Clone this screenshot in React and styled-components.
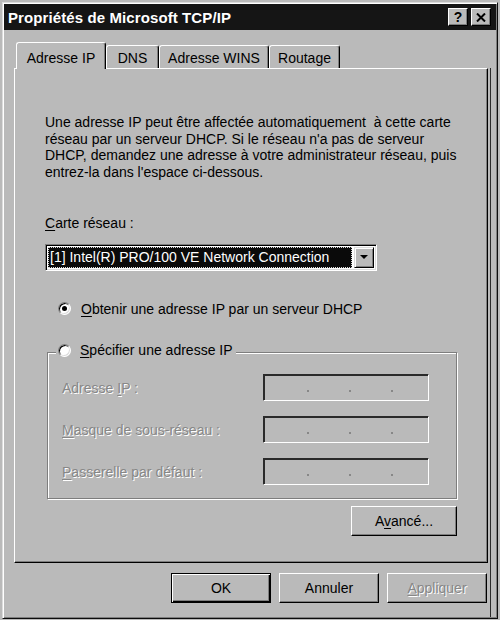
import React from 'react'
import styled, { createGlobalStyle, css } from 'styled-components'

const FACE = '#bababa'
const SHADOW = '#7e7e7e'

const GlobalStyle = createGlobalStyle`
  html, body {
    margin: 0;
    padding: 0;
    background: ${FACE};
  }
  body {
    font-family: "Liberation Sans", Arial, sans-serif;
    font-size: 14px;
    color: #000;
  }
`;

const Screen = styled.div`
  width: 500px;
  height: 620px;
  overflow: hidden;
  background: ${FACE};
  padding: 2px 0 0 2px;
  box-sizing: border-box;
`;

const Dialog = styled.div`
  box-sizing: border-box;
  width: 496px;
  height: 617px;
  padding: 1px;
  background: ${FACE};
  border: 1px solid;
  border-color: #dcdcdc #0c0c0c #0c0c0c #dcdcdc;
  box-shadow: inset 1px 1px #fff, inset -1px -1px ${SHADOW};
  display: flex;
  flex-direction: column;
`;

const TitleBar = styled.div`
  height: 26px;
  background: #151515;
  display: flex;
  align-items: center;
  justify-content: space-between;
  padding: 0 5px 0 4px;
`;

const Title = styled.span`
  color: #fff;
  font-weight: bold;
  font-size: 15px;
  letter-spacing: 0.1px;
`;

const TitleButtons = styled.div`
  display: flex;
  gap: 3px;
`;

const TitleButton = styled.span`
  box-sizing: border-box;
  width: 20px;
  height: 18px;
  background: ${FACE};
  border: 1px solid;
  border-color: #fff #000 #000 #fff;
  box-shadow: inset -1px -1px ${SHADOW};
  display: flex;
  align-items: center;
  justify-content: center;
  font-weight: bold;
  font-size: 14px;
  line-height: 1;
`;

const Body = styled.div`
  flex: 1;
  display: flex;
  padding: 12px 0 0 10px;
`;

const Main = styled.div`
  width: 474px;
  display: flex;
  flex-direction: column;
`;

const Gutter = styled.div`
  flex: 1;
  margin: 26px 0 0 2px;
  border-left: 1px solid #2a2a2a;
`;

const TabStrip = styled.div`
  height: 26px;
  display: flex;
  align-items: flex-end;
  padding-left: 2px;
`;

const Tab = styled.div`
  box-sizing: border-box;
  width: ${p => p.$w}px;
  height: 23px;
  padding-top: 4px;
  line-height: 16px;
  text-align: center;
  background: ${FACE};
  border-top: 1px solid #fff;
  border-left: 1px solid #fff;
  border-right: 1px solid #000;
  border-radius: 3px 3px 0 0;
  box-shadow: inset -1px 0 ${SHADOW};
  white-space: nowrap;
  ${p => p.$active && css`
    height: 27px;
    padding-top: 7px;
    margin-bottom: -1px;
    position: relative;
    z-index: 1;
  `}
`;

const Panel = styled.div`
  box-sizing: border-box;
  height: 495px;
  border: 1px solid;
  border-color: #fff #000 #000 #fff;
  box-shadow: inset -1px -1px ${SHADOW};
  padding: 45px 0 0 30px;
  display: flex;
  flex-direction: column;
`;

const Intro = styled.p`
  margin: 0;
  line-height: 16.5px;
  white-space: nowrap;
`;

const Key = styled.span`
  text-decoration: underline;
  text-underline-offset: 2px;
`;

const FieldLabel = styled.div`
  margin-top: 35px;
  line-height: 16.5px;
`;

const Combo = styled.div`
  box-sizing: border-box;
  width: 332px;
  height: 27px;
  margin-top: 12px;
  display: flex;
  align-items: stretch;
  gap: 2px;
  padding: 1px;
  background: #fff;
  border: 1px solid;
  border-color: ${SHADOW} #fff #fff ${SHADOW};
  box-shadow: inset 1px 1px #000, inset -1px -1px #dcdcdc;
`;

const ComboValue = styled.div`
  flex: 1;
  padding: 1px 0 1px 1px;
  display: flex;
`;

const Selected = styled.span`
  flex: 1;
  background: #0a0a0a;
  color: #fff;
  border: 1px dotted #d8d8d8;
  line-height: 18px;
  padding-left: 1px;
  white-space: nowrap;
`;

const ComboArrow = styled.span`
  box-sizing: border-box;
  width: 20px;
  margin: 1px 1px 1px 0;
  background: ${FACE};
  border: 1px solid;
  border-color: #dcdcdc #000 #000 #dcdcdc;
  box-shadow: inset 1px 1px #fff, inset -1px -1px ${SHADOW};
  display: flex;
  align-items: center;
  justify-content: center;
`;

const RadioRow = styled.label`
  display: flex;
  align-items: center;
  gap: 10px;
  line-height: 16.5px;
  margin: 30px 0 0 13px;
`;

const Radio = styled.span`
  box-sizing: border-box;
  width: 13px;
  height: 13px;
  border-radius: 50%;
  background: #fff;
  border: 1px solid;
  border-color: ${SHADOW} #fff #fff ${SHADOW};
  box-shadow: inset 1px 1px #000, inset -1px -1px #dcdcdc;
  display: flex;
  align-items: center;
  justify-content: center;
  &::after {
    content: '';
    width: 5px;
    height: 5px;
    border-radius: 50%;
    background: ${p => (p.$checked ? '#000' : 'transparent')};
  }
`;

const GroupBox = styled.div`
  box-sizing: border-box;
  position: relative;
  width: 410px;
  height: 147px;
  margin: 35px 0 0 2px;
  padding: 21px 0 0 14px;
  border: 1px solid ${SHADOW};
  box-shadow: 1px 1px 0 #fff, inset 1px 1px 0 #fff;
`;

const Legend = styled.label`
  position: absolute;
  top: -11px;
  left: 8px;
  padding: 0 3px 0 2px;
  background: ${FACE};
  display: flex;
  align-items: center;
  gap: 9px;
  line-height: 16.5px;
`;

const FieldGrid = styled.div`
  display: grid;
  grid-template-columns: 201px 166px;
  grid-auto-rows: 27px;
  row-gap: 15px;
  align-items: center;
`;

const Disabled = styled.span`
  color: #878787;
  text-shadow: 1px 1px #fff;
  white-space: nowrap;
`;

const IpField = styled.div`
  box-sizing: border-box;
  height: 27px;
  background: ${FACE};
  border: 1px solid;
  border-color: #2a2a2a #fff #fff #2a2a2a;
  box-shadow: inset 1px 1px #2a2a2a;
  display: flex;
  align-items: flex-end;
  gap: 40px;
  padding: 0 0 8px 43px;
`;

const Dot = styled.span`
  width: 2px;
  height: 2px;
  background: #878787;
`;

const ActionRow = styled.div`
  width: 412px;
  display: flex;
  justify-content: flex-end;
  margin-top: 7px;
`;

const Button = styled.button`
  box-sizing: border-box;
  width: ${p => p.$w || 100}px;
  height: 30px;
  padding: 0;
  font-family: inherit;
  font-size: 14px;
  color: #000;
  background: ${FACE};
  border: 1px solid;
  border-color: #fff #000 #000 #fff;
  box-shadow: inset -1px -1px ${SHADOW};
  ${p => p.$default && css`
    border-color: #000;
    box-shadow: inset 1px 1px #fff, inset -1px -1px #000, inset -2px -2px ${SHADOW};
  `}
  &:disabled {
    color: #878787;
    text-shadow: 1px 1px #fff;
  }
`;

const DialogButtons = styled.div`
  display: flex;
  justify-content: flex-end;
  gap: 8px;
  margin: 10px 1px 0 0;
`;

const tabs = [
  { label: 'Adresse IP', w: 90, active: true },
  { label: 'DNS', w: 53 },
  { label: 'Adresse WINS', w: 110 },
  { label: 'Routage', w: 71 }
]

const fields = [
  { key: 'I', before: 'Adresse ', after: 'P :' },
  { key: 'M', before: '', after: 'asque de sous-réseau :' },
  { key: 'P', before: '', after: 'asserelle par défaut :' }
]

const App = () => (
  <>
    <GlobalStyle />
    <Screen>
      <Dialog>
        <TitleBar>
          <Title>Propriétés de Microsoft TCP/IP</Title>
          <TitleButtons>
            <TitleButton>?</TitleButton>
            <TitleButton>
              <svg width="10" height="9" viewBox="0 0 10 9">
                <path d="M1 0.5 L9 8.5 M9 0.5 L1 8.5" stroke="#000" strokeWidth="2" />
              </svg>
            </TitleButton>
          </TitleButtons>
        </TitleBar>
        <Body>
          <Main>
            <TabStrip>
              {tabs.map(t => (
                <Tab key={t.label} $w={t.w} $active={t.active}>{t.label}</Tab>
              ))}
            </TabStrip>
            <Panel>
              <Intro>
                Une adresse IP peut être affectée automatiquement&nbsp; à cette carte<br />
                réseau par un serveur DHCP. Si le réseau n'a pas de serveur<br />
                DHCP, demandez une adresse à votre administrateur réseau, puis<br />
                entrez-la dans l'espace ci-dessous.
              </Intro>
              <FieldLabel><Key>C</Key>arte réseau :</FieldLabel>
              <Combo>
                <ComboValue>
                  <Selected>[1] Intel(R) PRO/100 VE Network Connection</Selected>
                </ComboValue>
                <ComboArrow>
                  <svg width="8" height="4" viewBox="0 0 8 4">
                    <path d="M0 0 H8 L4 4 Z" fill="#000" />
                  </svg>
                </ComboArrow>
              </Combo>
              <RadioRow>
                <Radio $checked />
                <span><Key>O</Key>btenir une adresse IP par un serveur DHCP</span>
              </RadioRow>
              <GroupBox>
                <Legend>
                  <Radio />
                  <span><Key>S</Key>pécifier une adresse IP</span>
                </Legend>
                <FieldGrid>
                  {fields.map(f => (
                    <React.Fragment key={f.key}>
                      <Disabled>{f.before}<Key>{f.key}</Key>{f.after}</Disabled>
                      <IpField><Dot /><Dot /><Dot /></IpField>
                    </React.Fragment>
                  ))}
                </FieldGrid>
              </GroupBox>
              <ActionRow>
                <Button $w={106}>A<Key>v</Key>ancé...</Button>
              </ActionRow>
            </Panel>
            <DialogButtons>
              <Button $default>OK</Button>
              <Button>Annuler</Button>
              <Button disabled><Key>A</Key>ppliquer</Button>
            </DialogButtons>
          </Main>
          <Gutter />
        </Body>
      </Dialog>
    </Screen>
  </>
)

export default App
